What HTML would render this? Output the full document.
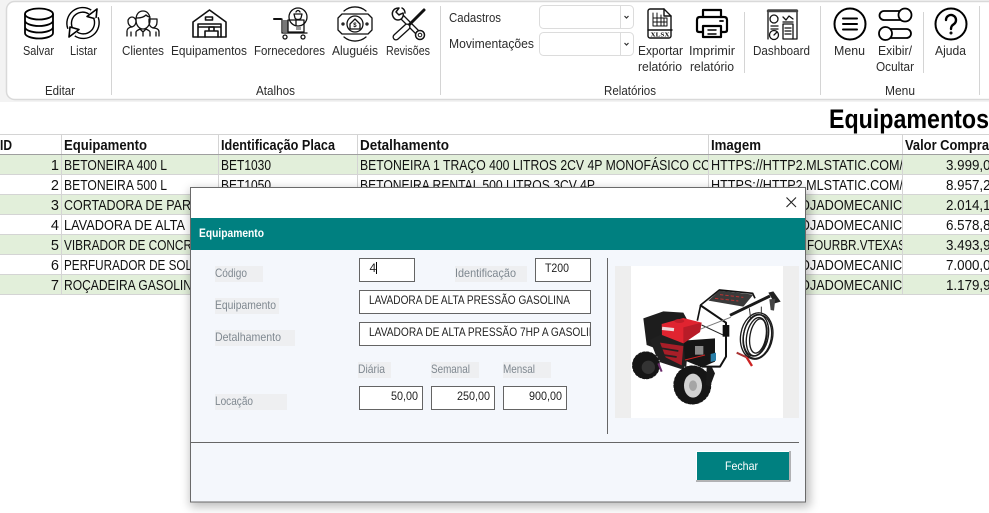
<!DOCTYPE html>
<html lang="pt-BR">
<head>
<meta charset="utf-8">
<title>Equipamentos</title>
<style>
html,body{margin:0;padding:0;background:#fff;width:989px;height:513px;overflow:hidden}
svg{display:block}
text{font-family:"Liberation Sans",sans-serif;white-space:pre}
.r{font-size:13px;fill:#2b2b2b}
.t{font-size:14.5px;fill:#111}
.h{font-size:14.5px;font-weight:bold;fill:#111}
.l{font-size:12px;fill:#7f8890}
.i{font-size:12px;fill:#222}
.k{fill:none;stroke:#111;stroke-width:1.2;stroke-linecap:round;stroke-linejoin:round}
.f{fill:none;stroke:#000;stroke-width:2;stroke-linecap:round;stroke-linejoin:round}
</style>
</head>
<body>
<svg xmlns="http://www.w3.org/2000/svg" width="989" height="513" viewBox="0 0 989 513">
<defs>
<clipPath id="c4"><rect x="358" y="155" width="350" height="140"/></clipPath>
<clipPath id="c5"><rect x="709" y="155" width="193" height="140"/></clipPath>
<clipPath id="c6"><rect x="360" y="322" width="230" height="24"/></clipPath>
<filter id="sh" x="-10%" y="-10%" width="120%" height="120%"><feGaussianBlur stdDeviation="5"/></filter>
</defs>

<!-- ribbon -->
<rect x="0" y="0" width="989" height="102" fill="#f3f3f3"/>
<rect x="6.5" y="1.5" width="1000" height="98" rx="8" fill="#fff" stroke="#d9d9d9" stroke-width="1.5"/>
<g stroke="#d4d4d4" stroke-width="1">
<line x1="111.5" y1="6" x2="111.5" y2="95"/>
<line x1="440.5" y1="6" x2="440.5" y2="95"/>
<line x1="820.5" y1="6" x2="820.5" y2="95"/>
<line x1="979.5" y1="6" x2="979.5" y2="95"/>
<line x1="744.5" y1="12" x2="744.5" y2="73"/>
<line x1="923.5" y1="12" x2="923.5" y2="73"/>
</g>

<!-- ribbon icons -->
<g class="f" style="stroke-width:1.8">
<ellipse cx="39" cy="14" rx="14" ry="5.5"/>
<path d="M25 14V33a14 5.5 0 0 0 28 0V14M25 20.5a14 5.5 0 0 0 28 0M25 27a14 5.5 0 0 0 28 0"/>
</g>
<g>
<path d="M70 28A13.500 13.500 0 0 1 90 12" fill="none" stroke="#000" stroke-width="6"/>
<path d="M70 28A13.500 13.500 0 0 1 90 12" fill="none" stroke="#fff" stroke-width="3.200"/>
<path d="M97 9L96 19 87 16.500Z" fill="#fff" stroke="#000" stroke-width="1.600" stroke-linejoin="round"/>
<g transform="rotate(180 83 23)">
<path d="M70 28A13.500 13.500 0 0 1 90 12" fill="none" stroke="#000" stroke-width="6"/>
<path d="M70 28A13.500 13.500 0 0 1 90 12" fill="none" stroke="#fff" stroke-width="3.200"/>
<path d="M97 9L96 19 87 16.500Z" fill="#fff" stroke="#000" stroke-width="1.600" stroke-linejoin="round"/>
</g>
</g>
<!-- clientes -->
<g class="k" style="stroke-width:1.3">
<path d="M136 20c0-6 3-9 7-9s7 3 7 9c0 5-3 9-7 9s-7-4-7-9z"/>
<path d="M137 18c3 0 7-1 9-3 1 1 3 2 4 2"/>
<path d="M127 36v-5c0-2 2-4 5-4M132 27c-3-1-4-3-4-6 0-2 2-4 4-4s4 2 4 4c0 3-1 5-4 6z"/>
<path d="M153 28c-3-1-4-3-4-6v-3h8v3c0 3-1 5-4 6zM153 28c3 0 6 1 6 4v4"/>
<path d="M136 36v-4c0-1 2-2 4-3l3 3 3-3c2 1 4 2 4 3v4M143 32v4M131 32v4M156 32v4"/>
</g>
<!-- warehouse -->
<g class="k" style="stroke-width:1.600">
<path d="M193 22L209.500 10 226 22v15h-33z"/>
<rect x="205.500" y="17" width="7" height="3"/>
<path d="M198 37V24h23v13M198 27h23"/>
<path d="M205 37v-6h4v-4h5v4h4v6M209 31h5"/>
</g>
<!-- fornecedores -->
<g class="k" style="stroke-width:1.300">
<circle cx="298" cy="17" r="9"/>
<path d="M294 14h8l-1 4c-1 2-5 2-6 0zM296 12c1-2 3-2 4 0"/>
<path d="M274 19h7" style="stroke-width:2"/>
<path d="M282 19v14h25"/>
<rect x="283" y="20" width="5" height="12" fill="#777" stroke="none"/>
<path d="M288 20h16v12h-16zM296 20v5"/>
<rect x="296" y="27" width="5" height="3" fill="#999" stroke="none"/>
<circle cx="285" cy="37" r="2"/><circle cx="303" cy="37" r="2"/>
</g>
<!-- alugueis -->
<g class="k" style="stroke-width:1.300">
<path d="M342 14h26l4 4v12l-4 4h-26l-4-4V18z"/>
<circle cx="355" cy="24" r="8"/>
<path d="M350 24l5-5 5 5v5h-10z"/>
<path d="M344 11a17 17 0 0 1 22 0M344 37a17 17 0 0 0 22 0"/>
<circle cx="343" cy="24" r="1"/><circle cx="367" cy="24" r="1"/>
</g>
<text x="353.300" y="27" style="font-size:6px;font-weight:bold">$</text>
<!-- revisoes -->
<g fill="none" stroke-linecap="round" stroke-linejoin="round">
<path d="M401 16L417 32" stroke="#111" stroke-width="5.500"/>
<path d="M401 16L417 32" stroke="#fff" stroke-width="3"/>
<path d="M399 8l-3 4 3 3 4-2c1 3-1 7-5 7s-7-5-5-9c1-2 3-3 6-3zM402 8c2 1 3 3 3 5" stroke="#111" stroke-width="1.500" fill="#fff"/>
<circle cx="420" cy="35" r="4.500" stroke="#111" stroke-width="1.500" fill="#fff"/>
<circle cx="420" cy="35" r="1.800" stroke="#111" stroke-width="1"/>
<path d="M424 10L409 25" stroke="#111" stroke-width="3"/>
<path d="M407 27L396 37" stroke="#111" stroke-width="7"/>
<path d="M407 27L396 37" stroke="#fff" stroke-width="4.400"/>
</g>
<!-- combos -->
<g fill="#fff" stroke="#dcdcdc">
<rect x="539.500" y="5.500" width="94" height="23" rx="4"/>
<rect x="539.500" y="32.500" width="94" height="23" rx="4"/>
<path d="M620.500 6v22M620.500 33v22" fill="none"/>
</g>
<path d="M624.500 16l2 2 2-2M624.500 43l2 2 2-2" fill="none" stroke="#333" stroke-width="1.200"/>
<!-- xlsx -->
<g class="k" style="stroke-width:1.400">
<path d="M650 9h14l7 7v20c0 1-1 2-2 2h-19c-1 0-2-1-2-2V11c0-1 1-2 2-2z"/>
<path d="M664 9v7h7M648 30h24"/>
<path d="M653 13v13h14V18h-14M653 22h14M657 13v13M661 15v11M664 18v8" style="stroke-width:1"/>
</g>
<text x="650.500" y="36.500" textLength="19" lengthAdjust="spacingAndGlyphs" style="font-size:6.500px;font-weight:bold;font-family:'Liberation Serif',serif" fill="#000">XLSX</text>
<!-- printer -->
<g class="f" style="stroke-width:2.200">
<path d="M703 17V10h18v7"/>
<path d="M703 32h-4c-1.500 0-2-1-2-2V20c0-2 1-3 3-3h24c2 0 3 1 3 3v10c0 1-.5 2-2 2h-4"/>
<path d="M703 26h18v11h-18z"/>
<path d="M708 30h8M708 34h8" style="stroke-width:1.400"/>
<path d="M720 21h3" style="stroke-width:1.800"/>
</g>
<!-- dashboard -->
<g class="k" style="stroke-width:1.300">
<path d="M768 39V10h29v29h-4"/>
<path d="M768 11h29" style="stroke-width:2.500;stroke:#444"/>
<circle cx="774" cy="19" r="4"/>
<path d="M771 26h7M771 29h7"/>
<circle cx="774" cy="35" r="4.500" fill="#fff"/>
<path d="M774 35l3-3"/>
<path d="M783 17l3 3 3-4 4 3M783 22h10"/>
<rect x="783" y="24" width="10" height="15" fill="#fff"/>
<path d="M785 28h6M785 31h6M785 34h6"/>
</g>
<!-- menu -->
<g class="f"><circle cx="850" cy="24" r="15.500"/><path d="M843 18.500h14M843 24h14M843 29.500h14"/></g>
<!-- toggles -->
<g class="f" style="stroke-width:1.800">
<rect x="879.500" y="11" width="28" height="9" rx="4.500"/>
<circle cx="905" cy="15" r="6.500" fill="#fff"/>
<rect x="882" y="29" width="29" height="9" rx="4.500"/>
<circle cx="885.500" cy="33.500" r="6.500" fill="#fff"/>
</g>
<!-- ajuda -->
<g class="f"><circle cx="951" cy="24" r="15.500"/><path d="M946 20a5 5 0 1 1 8 4c-2 1.500-3 2.500-3 5" stroke-width="2.400"/><circle cx="951" cy="33" r=".6" stroke-width="1.800"/></g>

<!-- ribbon text -->
<g class="r">
<text x="23" y="55" textLength="31" lengthAdjust="spacingAndGlyphs">Salvar</text>
<text x="70" y="55" textLength="27" lengthAdjust="spacingAndGlyphs">Listar</text>
<text x="122" y="55" textLength="42" lengthAdjust="spacingAndGlyphs">Clientes</text>
<text x="171" y="55" textLength="76" lengthAdjust="spacingAndGlyphs">Equipamentos</text>
<text x="254" y="55" textLength="71" lengthAdjust="spacingAndGlyphs">Fornecedores</text>
<text x="332" y="55" textLength="46" lengthAdjust="spacingAndGlyphs">Aluguéis</text>
<text x="386" y="55" textLength="44" lengthAdjust="spacingAndGlyphs">Revisões</text>
<text x="449" y="22" textLength="52" lengthAdjust="spacingAndGlyphs">Cadastros</text>
<text x="449" y="48" textLength="85" lengthAdjust="spacingAndGlyphs">Movimentações</text>
<text x="638" y="55" textLength="45" lengthAdjust="spacingAndGlyphs">Exportar</text>
<text x="638" y="71" textLength="44" lengthAdjust="spacingAndGlyphs">relatório</text>
<text x="689" y="55" textLength="46" lengthAdjust="spacingAndGlyphs">Imprimir</text>
<text x="690" y="71" textLength="44" lengthAdjust="spacingAndGlyphs">relatório</text>
<text x="753" y="55" textLength="57" lengthAdjust="spacingAndGlyphs">Dashboard</text>
<text x="834" y="55" textLength="31" lengthAdjust="spacingAndGlyphs">Menu</text>
<text x="878" y="55" textLength="34" lengthAdjust="spacingAndGlyphs">Exibir/</text>
<text x="876" y="71" textLength="38" lengthAdjust="spacingAndGlyphs">Ocultar</text>
<text x="935" y="55" textLength="31" lengthAdjust="spacingAndGlyphs">Ajuda</text>
<text x="45" y="95" textLength="30" lengthAdjust="spacingAndGlyphs">Editar</text>
<text x="256" y="95" textLength="39" lengthAdjust="spacingAndGlyphs">Atalhos</text>
<text x="604" y="95" textLength="52" lengthAdjust="spacingAndGlyphs">Relatórios</text>
<text x="885" y="95" textLength="30" lengthAdjust="spacingAndGlyphs">Menu</text>
</g>

<!-- title -->
<text x="829" y="128" textLength="160" lengthAdjust="spacingAndGlyphs" style="font-size:27px;font-weight:bold" fill="#000">Equipamentos</text>

<!-- table -->
<g fill="#e2efda">
<rect x="0" y="155" width="989" height="19"/>
<rect x="0" y="195" width="989" height="19"/>
<rect x="0" y="235" width="989" height="19"/>
<rect x="0" y="275" width="989" height="19"/>
</g>
<g stroke="#d4d4d4">
<path d="M0 134.500H989M0 174.500H989M0 194.500H989M0 214.500H989M0 234.500H989M0 254.500H989M0 274.500H989M0 294.500H989"/>
<path d="M61.500 135V294M218.500 135V294M357.500 135V294M708.500 135V294M902.500 135V294"/>
</g>
<path d="M0 154.500H989" stroke="#9f9f9f"/>
<g class="h">
<text x="0" y="150" textLength="12" lengthAdjust="spacingAndGlyphs">ID</text>
<text x="64" y="150" textLength="83" lengthAdjust="spacingAndGlyphs">Equipamento</text>
<text x="221" y="150" textLength="114" lengthAdjust="spacingAndGlyphs">Identificação Placa</text>
<text x="360" y="150" textLength="89" lengthAdjust="spacingAndGlyphs">Detalhamento</text>
<text x="711" y="150" textLength="50" lengthAdjust="spacingAndGlyphs">Imagem</text>
<text x="905" y="150" textLength="84" lengthAdjust="spacingAndGlyphs">Valor Compra</text>
</g>
<g class="t" text-anchor="end">
<text x="59" y="170">1</text><text x="59" y="190">2</text><text x="59" y="210">3</text><text x="59" y="230">4</text><text x="59" y="250">5</text><text x="59" y="270">6</text><text x="59" y="290">7</text>
</g>
<g class="t">
<text x="64" y="170" textLength="103" lengthAdjust="spacingAndGlyphs">BETONEIRA 400 L</text>
<text x="64" y="190" textLength="103" lengthAdjust="spacingAndGlyphs">BETONEIRA 500 L</text>
<text x="64" y="210" textLength="127" lengthAdjust="spacingAndGlyphs">CORTADORA DE PAR</text>
<text x="64" y="230" textLength="121" lengthAdjust="spacingAndGlyphs">LAVADORA DE ALTA</text>
<text x="64" y="250" textLength="128" lengthAdjust="spacingAndGlyphs">VIBRADOR DE CONCR</text>
<text x="64" y="270" textLength="128" lengthAdjust="spacingAndGlyphs">PERFURADOR DE SOL</text>
<text x="64" y="290" textLength="128" lengthAdjust="spacingAndGlyphs">ROÇADEIRA GASOLIN</text>
<text x="221" y="170" textLength="50" lengthAdjust="spacingAndGlyphs">BET1030</text>
<text x="221" y="190" textLength="50" lengthAdjust="spacingAndGlyphs">BET1050</text>
</g>
<g clip-path="url(#c4)" class="t">
<text x="360" y="170" textLength="350" lengthAdjust="spacingAndGlyphs">BETONEIRA 1 TRAÇO 400 LITROS 2CV 4P MONOFÁSICO CC</text>
<text x="360" y="190" textLength="235" lengthAdjust="spacingAndGlyphs">BETONEIRA RENTAL 500 LITROS 3CV 4P</text>
</g>
<g clip-path="url(#c5)" class="t">
<text x="711" y="170" textLength="192" lengthAdjust="spacingAndGlyphs">HTTPS://HTTP2.MLSTATIC.COM/</text>
<text x="711" y="190" textLength="192" lengthAdjust="spacingAndGlyphs">HTTPS://HTTP2.MLSTATIC.COM/</text>
<text x="800" y="210" textLength="112" lengthAdjust="spacingAndGlyphs">OJADOMECANICO</text>
<text x="800" y="230" textLength="112" lengthAdjust="spacingAndGlyphs">OJADOMECANICO</text>
<text x="807" y="250" textLength="99" lengthAdjust="spacingAndGlyphs">FOURBR.VTEXAS</text>
<text x="800" y="270" textLength="112" lengthAdjust="spacingAndGlyphs">OJADOMECANICO</text>
<text x="800" y="290" textLength="112" lengthAdjust="spacingAndGlyphs">OJADOMECANICO</text>
</g>
<g class="t">
<text x="946" y="170" textLength="52" lengthAdjust="spacingAndGlyphs">3.999,00</text>
<text x="946" y="190" textLength="52" lengthAdjust="spacingAndGlyphs">8.957,20</text>
<text x="946" y="210" textLength="52" lengthAdjust="spacingAndGlyphs">2.014,10</text>
<text x="946" y="230" textLength="52" lengthAdjust="spacingAndGlyphs">6.578,80</text>
<text x="946" y="250" textLength="52" lengthAdjust="spacingAndGlyphs">3.493,90</text>
<text x="946" y="270" textLength="52" lengthAdjust="spacingAndGlyphs">7.000,00</text>
<text x="946" y="290" textLength="52" lengthAdjust="spacingAndGlyphs">1.179,90</text>
</g>

<!-- dialog -->
<rect x="190" y="189" width="620" height="318" fill="#000" opacity=".26" filter="url(#sh)"/>
<rect x="190.500" y="187.500" width="615" height="314.500" fill="#f4f7fc" stroke="#6a6a6a"/>
<rect x="191" y="188" width="614" height="30" fill="#fff"/>
<rect x="191" y="218" width="614" height="32" fill="#008080"/>
<path d="M786.500 197.500l9.500 9.500M796 197.500l-9.500 9.500" stroke="#222" stroke-width="1.100" fill="none"/>
<text x="199" y="237" textLength="65" lengthAdjust="spacingAndGlyphs" style="font-size:12px;font-weight:bold" fill="#fff">Equipamento</text>

<!-- label backgrounds -->
<g fill="#eeeff1">
<rect x="215" y="266" width="48" height="16"/>
<rect x="455" y="266" width="72" height="16"/>
<rect x="215" y="298" width="64" height="16"/>
<rect x="215" y="330" width="80" height="16"/>
<rect x="358" y="362" width="33" height="16"/>
<rect x="431" y="362" width="48" height="16"/>
<rect x="503" y="362" width="48" height="16"/>
<rect x="215" y="394" width="72" height="16"/>
</g>
<g class="l">
<text x="215" y="277" textLength="32" lengthAdjust="spacingAndGlyphs">Código</text>
<text x="455" y="277" textLength="61" lengthAdjust="spacingAndGlyphs">Identificação</text>
<text x="215" y="309" textLength="61" lengthAdjust="spacingAndGlyphs">Equipamento</text>
<text x="215" y="341" textLength="66" lengthAdjust="spacingAndGlyphs">Detalhamento</text>
<text x="358" y="373" textLength="27" lengthAdjust="spacingAndGlyphs">Diária</text>
<text x="431" y="373" textLength="39" lengthAdjust="spacingAndGlyphs">Semanal</text>
<text x="503" y="373" textLength="32" lengthAdjust="spacingAndGlyphs">Mensal</text>
<text x="215" y="405" textLength="38" lengthAdjust="spacingAndGlyphs">Locação</text>
</g>
<!-- inputs -->
<g fill="#fff" stroke="#646464">
<rect x="359.500" y="258.500" width="55" height="23"/>
<rect x="535.500" y="258.500" width="55" height="23"/>
<rect x="359.500" y="290.500" width="231" height="23"/>
<rect x="359.500" y="322.500" width="231" height="23"/>
<rect x="359.500" y="386.500" width="63" height="23"/>
<rect x="431.500" y="386.500" width="63" height="23"/>
<rect x="503.500" y="386.500" width="63" height="23"/>
</g>
<g class="i">
<text x="369.500" y="272">4</text>
<text x="545" y="272" textLength="24" lengthAdjust="spacingAndGlyphs">T200</text>
<text x="369" y="304" textLength="201" lengthAdjust="spacingAndGlyphs">LAVADORA DE ALTA PRESSÃO GASOLINA</text>
<g clip-path="url(#c6)"><text x="369" y="336" textLength="234" lengthAdjust="spacingAndGlyphs">LAVADORA DE ALTA PRESSÃO 7HP A GASOLINA</text></g>
<text x="418" y="400" text-anchor="end" textLength="27" lengthAdjust="spacingAndGlyphs">50,00</text>
<text x="490" y="400" text-anchor="end" textLength="33" lengthAdjust="spacingAndGlyphs">250,00</text>
<text x="562" y="400" text-anchor="end" textLength="33" lengthAdjust="spacingAndGlyphs">900,00</text>
</g>
<path d="M376.500 262v12" stroke="#000"/>
<path d="M607.500 258V434" stroke="#666"/>
<path d="M191 442.500H799" stroke="#666"/>

<!-- image -->
<rect x="615" y="266" width="184" height="152" fill="#eeeeee"/>
<rect x="631" y="266" width="152" height="152" fill="#fff"/>
<g transform="translate(600,250) scale(.33333)">
<!-- frame -->
<path d="M292 212L302 165 358 120 458 130 465 145" fill="none" stroke="#111" stroke-width="5" stroke-linejoin="round"/>
<path d="M325 152L358 122 460 134 430 170Z" fill="#3a3a3a"/>
<path d="M345 145l70 8M360 134l70 8" stroke="#b33" stroke-width="3" stroke-dasharray="10 6"/>
<path d="M300 165L378 218V320L360 350H300" fill="none" stroke="#111" stroke-width="6" stroke-linejoin="round"/>
<path d="M305 225l75 35" stroke="#222" stroke-width="3"/>
<rect x="368" y="225" width="20" height="35" fill="#111"/>
<!-- wand and gun -->
<path d="M300 238L392 202" stroke="#777" stroke-width="3"/>
<path d="M390 196L510 138" stroke="#1a1a1a" stroke-width="9"/>
<path d="M505 128L520 124 542 155 524 160Z" fill="#222"/>
<path d="M508 148L526 146 522 182 512 180Z" fill="#444"/>
<!-- hose -->
<g fill="none" stroke="#1a1a1a" stroke-width="4">
<ellipse cx="470" cy="258" rx="48" ry="70" transform="rotate(10 470 258)"/>
<ellipse cx="472" cy="260" rx="42" ry="66" transform="rotate(10 472 260)"/>
<ellipse cx="468" cy="256" rx="37" ry="63" transform="rotate(10 468 256)"/>
<ellipse cx="470" cy="260" rx="30" ry="58" transform="rotate(10 470 260)"/>
<ellipse cx="474" cy="258" rx="24" ry="52" transform="rotate(10 474 258)"/>
</g>
<path d="M448 175l4 30M484 170l0 25" stroke="#333" stroke-width="3"/>
<path d="M410 308L440 322" stroke="#a33" stroke-width="6"/>
<path d="M440 322L456 348" stroke="#c22" stroke-width="7"/>
<!-- engine -->
<path d="M130 205L190 184 250 188 262 210 240 290 180 300 140 285Z" fill="#1d1d1d"/>
<path d="M150 270L190 250 265 270 258 362 175 335Z" fill="#202020"/>
<path d="M180 278l70 10-5 58-48-24z" fill="#a81e28"/>
<path d="M185 295l50 8M190 315l40 6" stroke="#222" stroke-width="5"/>
<path d="M250 272L345 265V335L305 352 255 332Z" fill="#151515"/>
<rect x="285" y="288" width="25" height="26" fill="#8a8a8a"/>
<path d="M332 312L348 308 348 332 332 336Z" fill="#2a7fa8"/>
<path d="M255 330l60-15" stroke="#c22" stroke-width="3"/>
<path d="M185 222L250 204 305 218 300 246 250 280 186 255Z" fill="#e02430"/>
<path d="M250 280L300 246 305 218 250 232Z" fill="#b81c28"/>
<rect x="186" y="232" width="36" height="10" fill="#eee" opacity=".9" transform="rotate(6 204 238)"/>
<ellipse cx="238" cy="213" rx="15" ry="6" fill="#c01d28"/>
<!-- wheels -->
<circle cx="138" cy="346" r="42" fill="#161616"/>
<circle cx="138" cy="346" r="42" fill="none" stroke="#fff" stroke-width="2" stroke-dasharray="4 9"/>
<circle cx="145" cy="352" r="20" fill="#333"/>
<path d="M175 340l10 25" stroke="#6a2a6a" stroke-width="6"/>
<ellipse cx="277" cy="405" rx="57" ry="59" fill="#161616"/>
<ellipse cx="277" cy="405" rx="57" ry="59" fill="none" stroke="#fff" stroke-width="2" stroke-dasharray="4 9"/>
<ellipse cx="279" cy="407" rx="27" ry="36" fill="#d2d2d2"/>
<ellipse cx="279" cy="407" rx="12" ry="16" fill="#a5a5a5"/>
<path d="M320 352L335 350 345 370 330 410 318 405Z" fill="#1a1a1a"/>
</g>

<!-- button -->
<rect x="696" y="451" width="94.500" height="30.500" fill="#6b6b6b"/>
<rect x="696" y="451" width="93.500" height="29.500" fill="#fff"/>
<rect x="697" y="452" width="92" height="28" fill="#008080"/>
<text x="725" y="470" textLength="33" lengthAdjust="spacingAndGlyphs" style="font-size:12px" fill="#fff">Fechar</text>
</svg>
</body>
</html>
